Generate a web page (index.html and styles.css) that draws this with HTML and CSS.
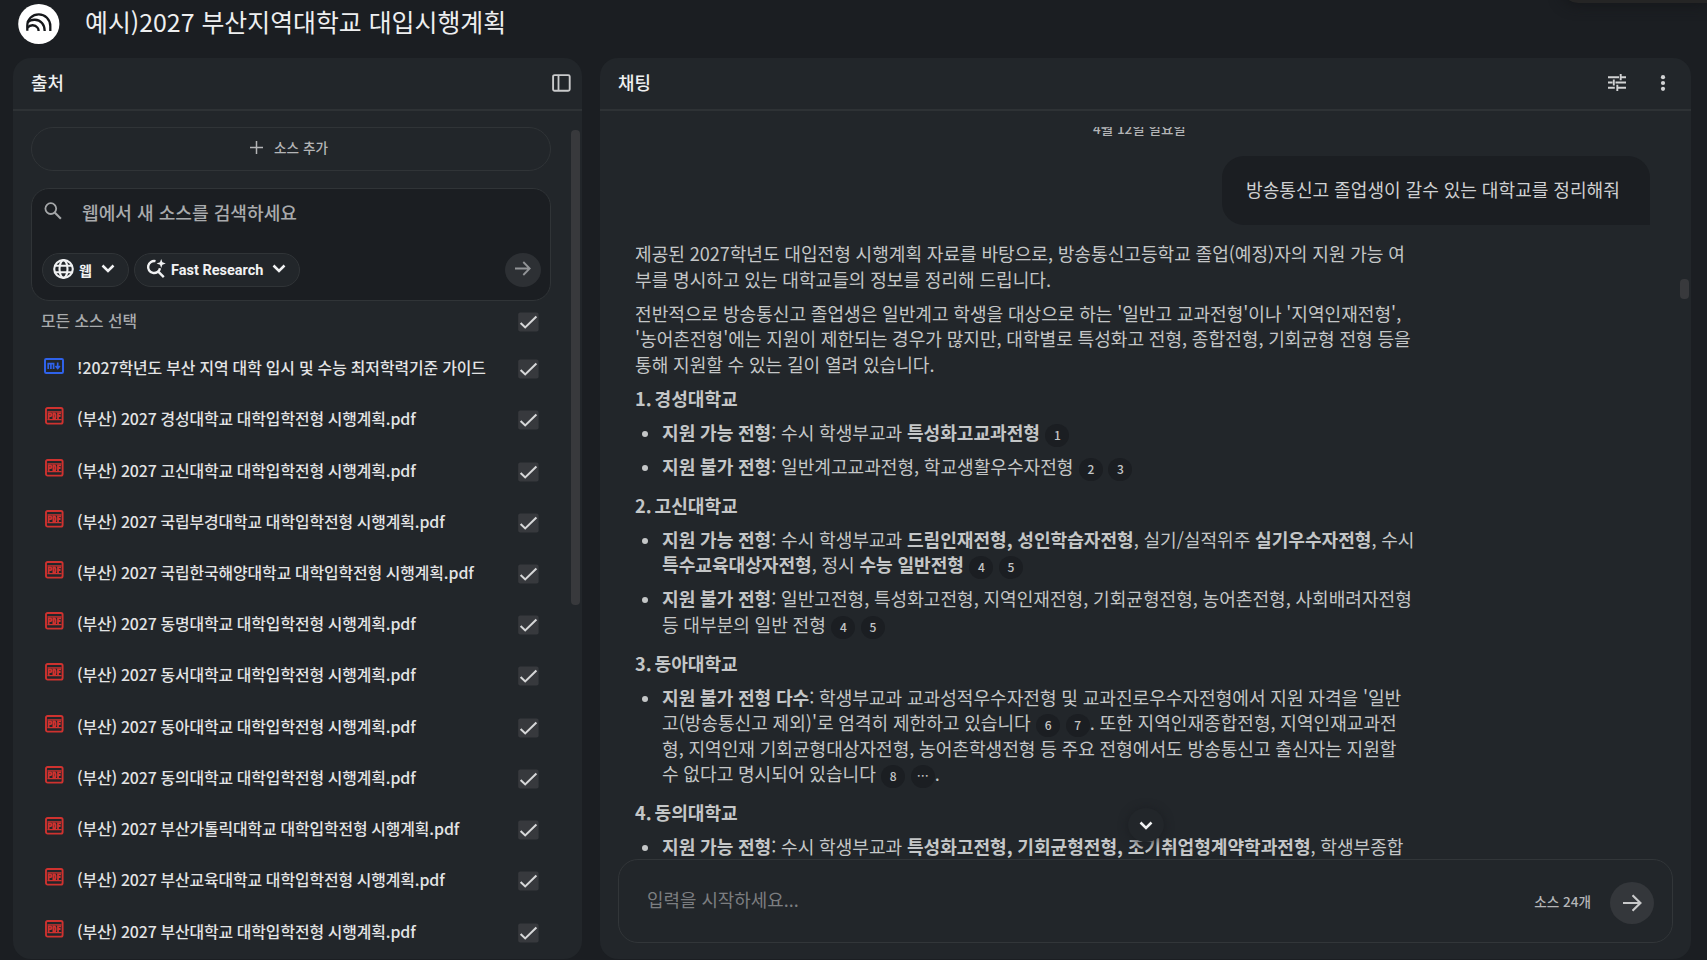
FILE: index.html
```html
<!DOCTYPE html>
<html lang="ko">
<head>
<meta charset="utf-8">
<title>예시)2027 부산지역대학교 대입시행계획</title>
<link rel="stylesheet" href="styles.css">
</head>
<body>
<svg class="defs" width="0" height="0">
  <symbol id="check" viewBox="0 0 21 20"><rect x="0.2" y="0.5" width="20.4" height="19" rx="2" fill="#37393d"/><path d="M2.6 11l4.6 4.4L18.4 4.6" fill="none" stroke="#d6d7d8" stroke-width="2.1"/></symbol>
  <symbol id="pdf" viewBox="0 0 19 18"><rect x="1" y="1" width="16.600" height="15.600" rx="1.6" fill="none" stroke="#cf322f" stroke-width="1.9"/><path d="M2.5 4.900h14M2.5 12.600h14" stroke="#cf322f" stroke-width="1.300"/><path d="M3.6 12.4V6.4h1.6q1.2 0 1.2 1.4t-1.2 1.4H3.8M8.4 6.4v5.2h.9q1.3 0 1.3-2.6t-1.3-2.6zM13 12.4V6.4h3M13 9h2.6" fill="none" stroke="#cf322f" stroke-width="1.800"/></symbol>
  <symbol id="chev" viewBox="0 0 14 9"><path d="M1.5 1.5L7 7l5.500-5.500" fill="none" stroke="#f1f2f3" stroke-width="2.500"/></symbol>
</svg>
<header class="top">
  <svg class="logo" viewBox="0 0 42 40"><ellipse cx="20.800" cy="20" rx="20.600" ry="20" fill="#fff"/><g fill="none" stroke="#15171a" stroke-width="2.300"><path d="M9.300 26.800V21.500C9.300 15 14.500 10.300 20.800 10.300S32.300 15.500 32.300 22V27"/><path d="M9.400 18.500C13.500 14.500 20.500 15 24 19c1.900 2.200 2.700 4.800 2.700 8"/><path d="M9.400 23.800c3-3.600 7.800-3.100 10.100-.2 .9 1.100 1.100 2.200 1.100 3.400"/></g></svg>
  <h1>예시)2027 부산지역대학교 대입시행계획</h1>
  <div class="peek"></div>
</header>
<main class="panels">
  <section class="panel sources">
    <div class="panel-head"><h2>출처</h2>
      <svg class="i-side" viewBox="0 0 19 18"><rect x="1.100" y="1.100" width="16.600" height="15.600" rx="1.500" fill="none" stroke="#c9cacb" stroke-width="1.900"/><path d="M6.500 1v16" stroke="#c9cacb" stroke-width="1.800"/></svg>
    </div>
    <div class="src-body">
      <button class="add"><svg viewBox="0 0 13 13"><path d="M6.500 0v13M0 6.500h13" stroke="#b4b5b7" stroke-width="1.500"/></svg>소스 추가</button>
      <div class="search">
        <div class="query"><svg viewBox="0 0 18 18"><circle cx="6.800" cy="6.600" r="5.400" fill="none" stroke="#a4a6a8" stroke-width="1.800"/><path d="M10.700 10.500l6.200 6.300" stroke="#a4a6a8" stroke-width="2.100"/></svg><span>웹에서 새 소스를 검색하세요</span></div>
        <div class="chips">
          <div class="chip web"><svg class="globe" viewBox="0 0 21 20"><g fill="none" stroke="#f1f2f3" stroke-width="2.100"><ellipse cx="10.500" cy="10" rx="9.300" ry="8.900"/><ellipse cx="10.500" cy="10" rx="4" ry="8.900"/><path d="M2 6.800h17M2 13.200h17"/></g></svg><span>웹</span><svg class="chev"><use href="#chev"/></svg></div>
          <div class="chip fast"><svg class="spark" viewBox="0 0 20 20"><path d="M9.500 2.200A6 6 0 1 0 14 9.200M11.800 12.200l6 6" fill="none" stroke="#f1f2f3" stroke-width="2.400"/><path d="M15.200 0l1.200 3.300 3.400 1.200-3.400 1.200-1.200 3.300-1.200-3.300-3.400-1.200 3.400-1.200z" fill="#f1f2f3"/></svg><span>Fast Research</span><svg class="chev"><use href="#chev"/></svg></div>
          <div class="go"><svg viewBox="0 0 16 15"><path d="M0 7.500h14.500M8.300 1l6.400 6.500L8.300 14" fill="none" stroke="#929497" stroke-width="1.800"/></svg></div>
        </div>
      </div>
      <div class="all"><span>모든 소스 선택</span><svg class="cb"><use href="#check"/></svg></div>
      <ul class="list">
        <li><svg class="ic md" viewBox="0 0 20 16"><rect x="1" y="1" width="18" height="14" rx="1.200" fill="none" stroke="#2f62ea" stroke-width="2"/><path d="M4.200 11V5.600h5.400V11M6.900 5.600V11M13.700 4.600v6M11.500 8l2.200 2.400L15.900 8" fill="none" stroke="#2f62ea" stroke-width="1.700"/></svg><span class="guide">!2027학년도 부산 지역 대학 입시 및 수능 최저학력기준 가이드</span><svg class="cb"><use href="#check"/></svg></li>
        <li><svg class="ic"><use href="#pdf"/></svg><span>(부산) 2027 경성대학교 대학입학전형 시행계획.pdf</span><svg class="cb"><use href="#check"/></svg></li>
        <li><svg class="ic"><use href="#pdf"/></svg><span>(부산) 2027 고신대학교 대학입학전형 시행계획.pdf</span><svg class="cb"><use href="#check"/></svg></li>
        <li><svg class="ic"><use href="#pdf"/></svg><span>(부산) 2027 국립부경대학교 대학입학전형 시행계획.pdf</span><svg class="cb"><use href="#check"/></svg></li>
        <li><svg class="ic"><use href="#pdf"/></svg><span>(부산) 2027 국립한국해양대학교 대학입학전형 시행계획.pdf</span><svg class="cb"><use href="#check"/></svg></li>
        <li><svg class="ic"><use href="#pdf"/></svg><span>(부산) 2027 동명대학교 대학입학전형 시행계획.pdf</span><svg class="cb"><use href="#check"/></svg></li>
        <li><svg class="ic"><use href="#pdf"/></svg><span>(부산) 2027 동서대학교 대학입학전형 시행계획.pdf</span><svg class="cb"><use href="#check"/></svg></li>
        <li><svg class="ic"><use href="#pdf"/></svg><span>(부산) 2027 동아대학교 대학입학전형 시행계획.pdf</span><svg class="cb"><use href="#check"/></svg></li>
        <li><svg class="ic"><use href="#pdf"/></svg><span>(부산) 2027 동의대학교 대학입학전형 시행계획.pdf</span><svg class="cb"><use href="#check"/></svg></li>
        <li><svg class="ic"><use href="#pdf"/></svg><span>(부산) 2027 부산가톨릭대학교 대학입학전형 시행계획.pdf</span><svg class="cb"><use href="#check"/></svg></li>
        <li><svg class="ic"><use href="#pdf"/></svg><span>(부산) 2027 부산교육대학교 대학입학전형 시행계획.pdf</span><svg class="cb"><use href="#check"/></svg></li>
        <li><svg class="ic"><use href="#pdf"/></svg><span>(부산) 2027 부산대학교 대학입학전형 시행계획.pdf</span><svg class="cb"><use href="#check"/></svg></li>
      </ul>
      <div class="thumb src-thumb"></div>
    </div>
  </section>
  <section class="panel chat">
    <div class="panel-head"><h2>채팅</h2>
      <div class="tools">
        <svg class="tune" viewBox="0 0 18 17"><path d="M0 3.200h11M13 3.200h5M12.700 0v6.200M0 8.500h4.500M7.500 8.500H18M5.800 5.400v6.200M0 13.800h6.800M9.500 13.800H18M9.300 10.800V17" fill="none" stroke="#d2d3d4" stroke-width="1.900"/></svg>
        <svg class="dots" viewBox="0 0 6 16"><circle cx="3" cy="2.200" r="2.100"/><circle cx="3" cy="8" r="2.100"/><circle cx="3" cy="13.800" r="2.100"/></svg>
      </div>
    </div>
    <div class="feed">
      <div class="date">4월 12일 일요일</div>
      <div class="bubble">방송통신고 졸업생이 갈수 있는 대학교를 정리해줘</div>
      <article class="answer">
        <p>제공된 2027학년도 대입전형 시행계획 자료를 바탕으로, 방송통신고등학교 졸업(예정)자의 지원 가능 여<br>부를 명시하고 있는 대학교들의 정보를 정리해 드립니다.</p>
        <p>전반적으로 방송통신고 졸업생은 일반계고 학생을 대상으로 하는 '일반고 교과전형'이나 '지역인재전형',<br>'농어촌전형'에는 지원이 제한되는 경우가 많지만, 대학별로 특성화고 전형, 종합전형, 기회균형 전형 등을<br>통해 지원할 수 있는 길이 열려 있습니다.</p>
        <h3 class="first">1. 경성대학교</h3>
        <ul>
          <li><b>지원 가능 전형</b>: 수시 학생부교과 <b>특성화고교과전형</b><i>1</i></li>
          <li><b>지원 불가 전형</b>: 일반계고교과전형, 학교생활우수자전형<i>2</i><i>3</i></li>
        </ul>
        <h3>2. 고신대학교</h3>
        <ul>
          <li><b>지원 가능 전형</b>: 수시 학생부교과 <b>드림인재전형, 성인학습자전형</b>, 실기/실적위주 <b>실기우수자전형</b>, 수시<br><b>특수교육대상자전형</b>, 정시 <b>수능 일반전형</b><i>4</i><i>5</i></li>
          <li><b>지원 불가 전형</b>: 일반고전형, 특성화고전형, 지역인재전형, 기회균형전형, 농어촌전형, 사회배려자전형<br>등 대부분의 일반 전형<i>4</i><i>5</i></li>
        </ul>
        <h3>3. 동아대학교</h3>
        <ul>
          <li><b>지원 불가 전형 다수</b>: 학생부교과 교과성적우수자전형 및 교과진로우수자전형에서 지원 자격을 '일반<br>고(방송통신고 제외)'로 엄격히 제한하고 있습니다<i>6</i><i>7</i>. 또한 지역인재종합전형, 지역인재교과전<br>형, 지역인재 기회균형대상자전형, 농어촌학생전형 등 주요 전형에서도 방송통신고 출신자는 지원할<br>수 없다고 명시되어 있습니다<i>8</i><i>⋯</i>.</li>
        </ul>
        <h3>4. 동의대학교</h3>
        <ul>
          <li><b>지원 가능 전형</b>: 수시 학생부교과 <b>특성화고전형, 기회균형전형, 조기취업형계약학과전형</b>, 학생부종합</li>
        </ul>
      </article>
      <div class="thumb chat-thumb"></div>
      <div class="down"><svg class="chev"><use href="#chev"/></svg></div>
    </div>
    <div class="composer"><span class="ph">입력을 시작하세요...</span><span class="count">소스 24개</span><div class="send"><svg viewBox="0 0 19 18"><path d="M0 9h17M9.500 1.200L17.400 9l-7.900 7.800" fill="none" stroke="#c8c9ca" stroke-width="2.200"/></svg></div></div>
  </section>
</main>
</body>
</html>
```
FILE: styles.css
```css
* { box-sizing: border-box; }
body {
  margin: 0;
  width: 1707px;
  height: 960px;
  overflow: hidden;
  background: #1b1e22;
  color: #e3e4e5;
  font-family: "Noto Sans CJK KR", sans-serif;
  white-space: nowrap;
}
h1, h2, h3, p, ul { margin: 0; padding: 0; }
svg { display: block; flex: none; }
.defs { position: absolute; }

.top { position: relative; display: flex; height: 58px; padding: 4px 0 0 18px; gap: 25px; }
.logo { width: 42px; height: 40px; }
h1 { font-size: 24.900px; line-height: 35px; font-weight: 400; color: #eeeff0; }
.peek {
  position: absolute;
  right: 0;
  top: -16px;
  width: 145px;
  height: 19px;
  border-radius: 0 0 0 16px;
  background: #252525;
  box-shadow: 0 2px 14px #15171a;
}

.panels { display: flex; gap: 18px; padding-left: 13px; height: 901px; }
.panel { display: flex; flex-direction: column; background: #22262a; border-radius: 18px; overflow: hidden; }
.sources { width: 569px; }
.chat { width: 1091px; }
.panel-head {
  display: flex;
  align-items: center;
  justify-content: space-between;
  height: 53px;
  flex: none;
  border-bottom: 2px solid #2e3235;
  padding: 0 11px 2px 18px;
}
h2 { font-size: 17.900px; line-height: 26px; font-weight: 500; color: #eeeff0; padding-bottom: 1px; }
.i-side { width: 19px; height: 18px; }
.tools { display: flex; align-items: center; gap: 34px; padding-right: 14px; }
.tune { width: 18px; height: 17px; }
.dots { width: 6px; height: 16px; fill: #d2d3d4; }

.src-body { position: relative; flex: 1; padding: 16px 31px 0 18px; }
.add {
  display: flex;
  align-items: center;
  justify-content: center;
  gap: 11px;
  width: 520px;
  height: 44px;
  padding: 0 4px 4px 0;
  border: 1px solid #303437;
  border-radius: 22px;
  background: none;
  color: #b4b5b7;
  font: 500 13.600px "Noto Sans CJK KR", sans-serif;
}
.add svg { width: 13px; height: 13px; }
.search {
  width: 520px;
  height: 113px;
  margin-top: 17px;
  padding: 10px 9px 0 10px;
  border: 1px solid #303437;
  border-radius: 18px;
  background: #1b1e22;
}
.query { display: flex; gap: 20px; padding-left: 2px; height: 54px; color: #a9abad; font-size: 18.100px; line-height: 26px; font-weight: 500; }
.query svg { width: 18px; height: 18px; margin-top: 3px; }
.chips { display: flex; gap: 5px; }
.chip {
  display: flex;
  align-items: center;
  height: 34px;
  border: 1px solid #303437;
  border-radius: 17px;
  background: #22262a;
  color: #f1f2f3;
  font-size: 14px;
  font-weight: 700;
  padding-bottom: 3px;
}
.chip span { margin-top: 3px; }
.chev { width: 14px; height: 9px; }
.web { width: 87px; padding-left: 10px; }
.web span { width: 14px; margin-left: 5px; margin-right: 8px; }
.globe { width: 21px; height: 20px; }
.fast { width: 166px; padding-left: 11px; }
.fast span { font-family: Roboto, sans-serif; font-size: 14.500px; width: 92px; margin-left: 5px; margin-right: 9px; }
.spark { width: 20px; height: 20px; }
.go { display: flex; align-items: center; justify-content: center; width: 36px; height: 34px; margin-left: auto; border-radius: 50%; background: #2d3034; padding-bottom: 3px; }
.go svg { width: 16px; height: 15px; }

.all { display: flex; align-items: center; justify-content: space-between; height: 42px; padding: 0 12px 0 10px; color: #a9abad; font-size: 15.800px; font-weight: 500; }
.all span { padding-bottom: 3px; }
.cb { width: 21px; height: 20px; margin-left: auto; }
.list { list-style: none; }
.list li { display: flex; align-items: center; height: 51.230px; padding: 0 12px 0 13px; font-size: 15.900px; font-weight: 500; color: #e3e4e5; }
.list span { margin-left: 13px; padding-bottom: 2px; letter-spacing: -.1px; word-spacing: -.6px; }
.list .guide { letter-spacing: -.05px; word-spacing: -.35px; }
.list .ic { width: 19px; height: 18px; margin: 0 0 7px 1px; }
.list .md { width: 20px; height: 16px; margin: 0 0 6px; }
.list li .cb { margin-top: 1px; }

.thumb { position: absolute; width: 9px; border-radius: 4px; background: #38393c; }
.src-thumb { right: 2px; top: 19px; height: 475px; }
.chat-thumb { right: 2px; top: 152px; height: 20px; }

.feed { position: relative; height: 732px; margin-top: 16px; overflow: hidden; flex: none; }
.date { margin-top: -12px; padding-left: 493px; height: 41px; color: #b4b5b7; font-size: 13.500px; line-height: 26px; font-weight: 500; }
.bubble {
  width: 428px;
  height: 69px;
  margin-left: 622px;
  padding-left: 24px;
  border-radius: 22px 22px 0 22px;
  background: #1b1e22;
  color: #cfd0d1;
  font-size: 18.100px;
  line-height: 66px;
  word-spacing: -.2px;
}
.answer { padding: 16px 0 0 35px; color: #c4c6c7; font-size: 18.100px; line-height: 25.600px; word-spacing: -.3px; letter-spacing: -.02px; }
.answer p { margin-bottom: 8.500px; }
.answer h3 { font-size: 18.100px; line-height: 25.600px; font-weight: 700; margin: 12.900px 0 8.500px; word-spacing: -2px; }
.answer .first { margin-top: 0; }
.answer ul { list-style: none; }
.answer li { position: relative; padding-left: 27px; margin-bottom: 8.500px; }
.answer li:last-child { margin-bottom: 0; }
.answer li::before { content: ""; position: absolute; left: 7px; top: 11px; width: 6px; height: 6px; border-radius: 50%; background: #c4c6c7; }
.answer i {
  display: inline-block;
  width: 24px;
  height: 23px;
  margin: -3px 0 -3px 5.500px;
  border-radius: 50%;
  background: #1b1e22;
  font-size: 12px;
  line-height: 22px;
  font-style: normal;
  font-weight: 500;
  text-align: center;
  vertical-align: 0;
}
.down {
  position: absolute;
  left: 528px;
  top: 681px;
  display: flex;
  align-items: center;
  justify-content: center;
  width: 36px;
  height: 34px;
  border-radius: 50%;
  background: #22262a;
  box-shadow: 0 1px 10px #1b1e22;
}
.composer {
  display: flex;
  align-items: center;
  width: 1055px;
  height: 84px;
  flex: none;
  margin-left: 18px;
  padding: 0 18px 0 28px;
  border: 1px solid #323639;
  border-radius: 20px;
  color: #7c7e81;
  font-size: 17.900px;
}
.ph { margin-top: -4px; }
.count { margin-left: auto; margin-right: 19px; color: #b4b5b7; font-size: 13.600px; font-weight: 500; }
.send { display: flex; align-items: center; justify-content: center; width: 44px; height: 42px; margin-top: 3px; border-radius: 50%; background: #34373b; }
.send svg { width: 19px; height: 18px; }
```
